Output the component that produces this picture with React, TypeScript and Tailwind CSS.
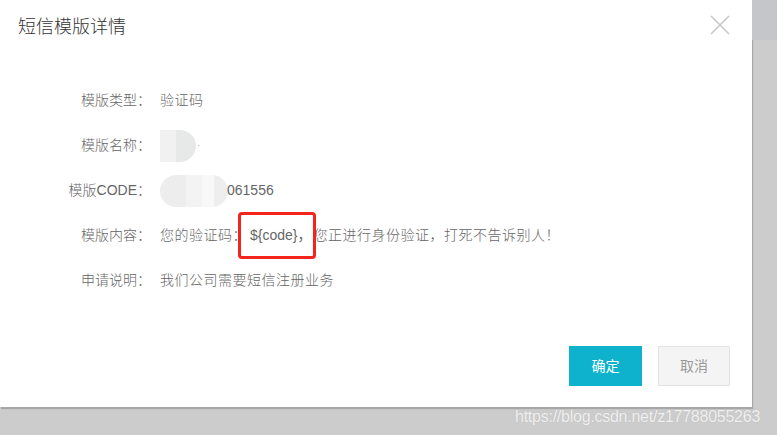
const rows = [
  { label: "模版类型：", kind: "text", value: "验证码" },
  { label: "模版名称：", kind: "name" },
  { label: "模版CODE：", kind: "code" },
  { label: "模版内容：", kind: "content" },
  { label: "申请说明：", kind: "text", value: "我们公司需要短信注册业务" },
];

function Mosaic({ wide }: { wide?: boolean }) {
  if (wide) {
    return (
      <div className="flex h-[32px] w-[68px] overflow-hidden rounded-full">
        <div className="w-[26px] bg-[#ededed]" />
        <div className="w-[16px] bg-[#f3f3f3]" />
        <div className="w-[12px] bg-[#f8f8f8]" />
        <div className="w-[14px] bg-[#eeeeee]" />
      </div>
    );
  }
  return (
    <div className="flex h-[32px] w-[36px] overflow-hidden rounded-r-full">
      <div className="w-[16px] bg-[#f1f1f1]" />
      <div className="w-[20px] bg-[#e7e8e8]" />
    </div>
  );
}

export default function App() {
  return (
    <div className="relative flex h-[435px] w-[777px] bg-[#cccccc] font-['Liberation_Sans','Noto_Sans_CJK_SC',sans-serif]">
      <div className="flex h-[407px] w-[752px] flex-col bg-white shadow-[1px_2px_1px_rgba(0,0,0,0.18)]">
        <div className="flex h-[55px] items-center justify-between pl-[18px] pr-[22px]">
          <h2 className="text-[18px] font-light text-[#333]">短信模版详情</h2>
          <svg className="-mt-[5px]" width="20" height="20" viewBox="0 0 20 20">
            <path d="M1 1 L19 19 M19 1 L1 19" stroke="#c8c8c8" strokeWidth="1.6" fill="none" />
          </svg>
        </div>

        <div className="flex flex-col pt-[23px] text-[14px] font-light text-[#666]">
          {rows.map((r) => (
            <div key={r.label} className="flex h-[45px] items-center">
              <div className="w-[151px] whitespace-nowrap text-right">{r.label}</div>
              <div className="ml-[9px] flex items-center tracking-[0.5px]">
                {r.kind === "text" && <span>{r.value}</span>}
                {r.kind === "name" && (
                  <>
                    <Mosaic />
                    <span className="ml-[1px] text-[10px] text-[#bbb]">·</span>
                  </>
                )}
                {r.kind === "code" && (
                  <>
                    <Mosaic wide />
                    <span className="-ml-[1px] font-normal tracking-normal">061556</span>
                  </>
                )}
                {r.kind === "content" && (
                  <>
                    <span>您的验证码：</span>
                    <span className="relative ml-[3px] font-normal tracking-normal text-[#666]">
                      ${"{code}"}，
                      <span className="absolute -left-[12px] -top-[13px] h-[47px] w-[78px] rounded-[4px] border-[3px] border-[#f4231b]" />
                    </span>
                    <span className="ml-[2px]">您正进行身份验证，打死不告诉别人！</span>
                  </>
                )}
              </div>
            </div>
          ))}
        </div>

        <div className="mt-[43px] flex justify-end gap-[16px] pr-[22px] text-[14px]">
          <button className="h-[40px] w-[73px] bg-[#0fb2cc] text-white">确定</button>
          <button className="h-[40px] w-[72px] border border-[#e3e3e3] bg-[#f4f4f4] text-[#999]">
            取消
          </button>
        </div>
      </div>

      <div className="flex flex-1 flex-col">
        <div className="h-[40px] bg-[#c4c6ca]" />
        <div className="flex-1" />
      </div>

      <div className="absolute left-[515px] top-[405px] text-[16px] tracking-[-0.25px] text-white/80 [text-shadow:0_0_1px_rgba(0,0,0,0.15)]">
        https://blog.csdn.net/z17788055263
      </div>
    </div>
  );
}
